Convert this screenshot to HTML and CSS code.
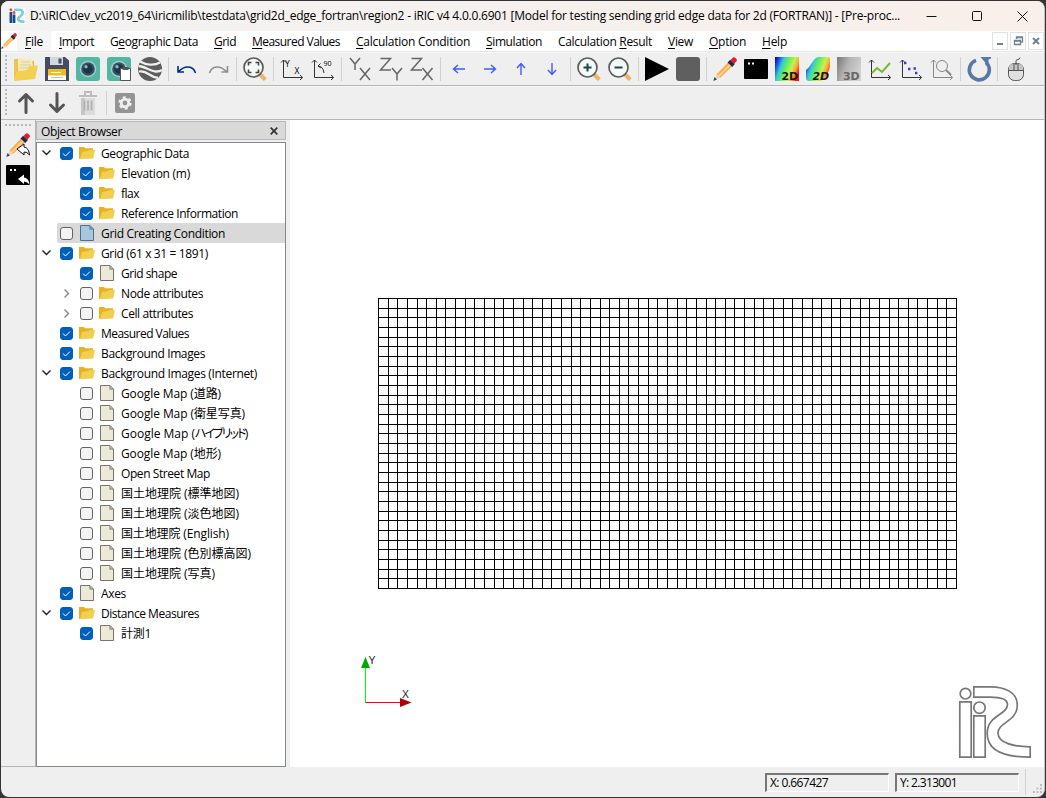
FILE: index.html
```html
<!DOCTYPE html>
<html lang="en">
<head>
<meta charset="utf-8">
<title>iRIC</title>
<link rel="stylesheet" href="styles.css">
</head>
<body>
<svg class="defs" width="0" height="0">
  <defs>
    <linearGradient id="rainbow" x1="0" y1="0.1" x2="1.05" y2="0.5">
      <stop offset="0" stop-color="#1000d8"/><stop offset=".1" stop-color="#1438f0"/><stop offset=".3" stop-color="#38c8d8"/><stop offset=".48" stop-color="#60f060"/><stop offset=".7" stop-color="#c8f050"/><stop offset=".85" stop-color="#ffa030"/><stop offset="1" stop-color="#ff1010"/>
    </linearGradient>
    <linearGradient id="gray" x1="0" y1="0" x2="1" y2=".4">
      <stop offset="0" stop-color="#777"/><stop offset=".5" stop-color="#b4b4b4"/><stop offset="1" stop-color="#d0d0d0"/>
    </linearGradient>
    <symbol id="pencil" viewBox="0 0 24 24">
      <path d="M3.5 17.5 17 3.5l4 4L7 21z" fill="#ffa94f"/><path d="M5 18.8 18.5 5l1.2 1.2L6.3 20z" fill="#ffd08c"/>
      <path d="M3.5 17.5 7 21l-5 2z" fill="#f6d3ad"/><path d="M.3 24l1.2-4 2.4 2.6z" fill="#20506c"/>
      <path d="M14.500 5.500l2.700-2.800 4.600 4.400-2.500 2.900z" fill="#12304e"/><path d="M17.3 3.2 20 .5q1.2-.8 2.3.3l1.3 1.500q.8 1-.2 2l-2.300 2.600z" fill="#e01f30"/>
    </symbol>
    <symbol id="folder" viewBox="0 0 16 13"><path d="M0 12.5V.6h5l1.2 1.2H14v3z" fill="#e6b422"/><path d="M1 12.7 3 5.5 9 4.5 10.3 3.5H16l-1.8 8.5z" fill="#f1cf50"/></symbol>
    <symbol id="page" viewBox="0 0 14 16"><path d="M.5.5h9.5l3.5 3.5v11.5H.5z" fill="var(--paper)" stroke="var(--edge)"/><path d="M9.5.5V4.5h4z" fill="var(--edge)"/><path d="M10.5 1.8v1.7h1.7z" fill="var(--paper)"/></symbol>
    <symbol id="camera" viewBox="0 0 24 24"><rect width="24" height="24" rx="3" fill="#52b7a2"/><circle cx="12" cy="12" r="8.3" fill="#a3ccca"/><circle cx="12" cy="12" r="6.8" fill="#365365"/><circle cx="12" cy="12" r="4.7" fill="#1d3446"/><circle cx="10" cy="9.7" r="1.7" fill="#8cb3c0"/></symbol>
    <symbol id="lens" viewBox="0 0 24 24"><path d="m16.8 17 5.5 5.700" stroke="#f4b15e" stroke-width="4"/><circle cx="10.500" cy="10.500" r="9.500" fill="#f4f8f6" stroke="#5a5c5c" stroke-width="1.700"/></symbol>
    <symbol id="axes" viewBox="0 0 24 24"><path d="M3.5 3v17.5H22M1 5.5 3.5 3 6 5.5M20 18l2.7 2.5L20 23" fill="none" stroke="#333"/></symbol>
    <symbol id="arrow" viewBox="0 0 24 24"><path d="M18 12H7M11 8l-4.500 4 4.500 4" fill="none" stroke="#3d5cff" stroke-width="1.400"/></symbol>
    <symbol id="bold-arrow" viewBox="0 0 24 24"><path d="M12 21.500V3.500M5.500 10 12 3.500l6.500 6.500" fill="none" stroke="#555" stroke-width="3" stroke-linecap="round" stroke-linejoin="round"/></symbol>
  </defs>
</svg>
<div class="desktop">
<div class="window">
  <header class="titlebar">
    <svg class="app-icon" width="16" height="16" viewBox="0 0 16 16"><path fill="#fff" d="M0 0h16v16H0z"/><circle cx="1.900" cy="1.800" r="1.500" fill="#e24b4b"/><circle cx="5" cy="4.500" r="1.500" fill="#e24b4b"/><path d="M.5 4h2.700V15H.5zM3.700 6.500h2.700V15H3.700z" fill="#164a86"/><path d="M5 1.800h4.500c5 0 5.500 3.500 2 6.200C7.500 11 8.500 13.800 15.500 13.800" fill="none" stroke="#7ccbe5" stroke-width="2.600"/></svg>
    <span class="title" data-w="870">D:\iRIC\dev_vc2019_64\iricmilib\testdata\grid2d_edge_fortran\region2 - iRIC v4 4.0.0.6901 [Model for testing sending grid edge data for 2d (FORTRAN)] - [Pre-proc...</span>
    <svg class="captions" width="110" height="16" viewBox="0 0 110 16" fill="none" stroke="#111"><path d="M4.500 8.500h10M95.500 3.500l10 10M105.500 3.500l-10 10"/><rect x="50.500" y="3.500" width="9" height="9" rx="1"/></svg>
  </header>
  <nav class="menubar">
    <svg class="doc-icon" width="16" height="16"><use href="#pencil"/></svg>
    <span class="menu active"><b data-w="18"><u>F</u>ile</b></span><span class="menu"><b data-w="35"><u>I</u>mport</b></span><span class="menu"><b data-w="88">G<u>e</u>ographic Data</b></span><span class="menu"><b data-w="22"><u>G</u>rid</b></span><span class="menu"><b data-w="88"><u>M</u>easured Values</b></span><span class="menu"><b data-w="114"><u>C</u>alculation Condition</b></span><span class="menu"><b data-w="56"><u>S</u>imulation</b></span><span class="menu"><b data-w="94">Calculation <u>R</u>esult</b></span><span class="menu"><b data-w="25"><u>V</u>iew</b></span><span class="menu"><b data-w="37"><u>O</u>ption</b></span><span class="menu"><b data-w="25"><u>H</u>elp</b></span>
    <div class="mdi">
      <svg width="16" height="18"><path d="M5 12h6" stroke="#708090" stroke-width="2"/></svg>
      <svg width="16" height="18"><path d="M6.500 7V5h6v5h-2M4.500 8.500h6v4h-6z M4.500 9h6M6.500 5.500h6" fill="none" stroke="#708090" stroke-width="1.3"/></svg>
      <svg width="16" height="18"><path d="m5 6 6 6M11 6l-6 6" stroke="#708090" stroke-width="2"/></svg>
    </div>
  </nav>
  <div class="toolbar">
    <i class="handle"></i>
    <svg class="tool" viewBox="0 0 24 24"><path d="M0 2h7l2 2h11v16H0z" fill="#e5b936"/><path d="m4 1 14 1 2 15-16 3z" fill="#f4e9c0"/><path d="M7 5h9M6 8h11M6 11h11" stroke="#dfcf97"/><path d="M0 24 2 14.500 13 13l2.500-4L24 8.500 21 22z" fill="#f1d052"/><path d="m0 2 4 1v8l-2 3.500L0 24z" fill="#efc748"/></svg>
    <svg class="tool" viewBox="0 0 24 24"><path d="M0 0h20l4 3.500V24H0z" fill="#454b60"/><path d="M5 0h13v8H5z" fill="#d3d8de"/><path d="M13.500 1.500h3v5h-3z" fill="#454b60"/><path d="M3 12h18v11H3z" fill="#fff"/><path d="M3 12h18v6.500H3z" fill="#efbd20"/><path d="M6 15.500h10" stroke="#fff"/><path d="M6 20.500h12" stroke="#bcc0c8"/></svg>
    <svg class="tool"><use href="#camera"/></svg>
    <svg class="tool" viewBox="0 0 24 24"><use href="#camera"/><path d="M13.500 11.500h10v12h-10z" fill="#fff" stroke="#555"/><path d="M15.500 10h6v3h-6z" fill="#555"/></svg>
    <svg class="tool" viewBox="0 0 24 24"><circle cx="12" cy="12" r="12" fill="#5c5c5c"/><path d="M2 4.500C8 8 16 9 22 5.500M.5 9C8 9 16 18 24 13M1 14.500c8-2 12 7 19 6" fill="none" stroke="#efefef" stroke-width="2.300"/></svg>
    <i class="sep"></i>
    <svg class="tool" viewBox="0 0 24 24"><path d="M20.500 16C18 8.500 10 8 3.500 14.500M3 9v6h6" fill="none" stroke="#002b82" stroke-width="1.600"/></svg>
    <svg class="tool" viewBox="0 0 24 24"><path d="M3.500 16C6 8.500 14 8 20.500 14.500M21.500 9v6h-6" fill="none" stroke="#8c8f91" stroke-width="1.600"/></svg>
    <i class="sep"></i>
    <svg class="tool" viewBox="0 0 24 24"><use href="#lens"/><path d="M5.500 8.500v-3h3M12.500 5.500h3v3M15.500 12.500v3h-3M8.500 15.500h-3v-3" fill="none" stroke="#444" stroke-width="1.600"/></svg>
    <i class="sep"></i>
    <svg class="tool" viewBox="0 0 24 24"><use href="#axes"/><text x="5" y="9.500" font-size="8.500">Y</text><text x="14.500" y="17" font-size="8.500">X</text></svg>
    <svg class="tool" viewBox="0 0 24 24"><use href="#axes"/><path d="M7 9q5 0 6 7M9.500 6.500 7 9l3 2" fill="none" stroke="#333"/><text x="12.500" y="9" font-size="7">90</text></svg>
    <i class="sep"></i>
    <svg class="tool letters" viewBox="0 0 24 24"><path d="m2 1 5 6 5-6M7 7v6M12 11l10 12M22 11 12 23"/></svg>
    <svg class="tool letters" viewBox="0 0 24 24"><path d="M1.500 1.500h10L1.500 13H12M13 11l5 6 5-6M18 17v6.500"/></svg>
    <svg class="tool letters" viewBox="0 0 24 24"><path d="M1.500 1.500h10L1.500 13H12M12.500 11l10 12M22.500 11l-10 12"/></svg>
    <i class="sep"></i>
    <svg class="tool"><use href="#arrow"/></svg><svg class="tool right"><use href="#arrow"/></svg><svg class="tool up"><use href="#arrow"/></svg><svg class="tool down"><use href="#arrow"/></svg>
    <i class="sep"></i>
    <svg class="tool" viewBox="0 0 24 24"><use href="#lens"/><path d="M6.500 10.500h8M10.500 6.500v8" stroke="#1c4a4a" stroke-width="2"/></svg>
    <svg class="tool" viewBox="0 0 24 24"><use href="#lens"/><path d="M6.500 10.500h8" stroke="#1c4a4a" stroke-width="2"/></svg>
    <i class="sep"></i>
    <svg class="tool" viewBox="0 0 24 24"><path d="m0 0 24 12L0 24z"/></svg>
    <svg class="tool" viewBox="0 0 24 24"><rect width="24" height="24" rx="3" fill="#5f5f5f"/></svg>
    <i class="sep"></i>
    <svg class="tool"><use href="#pencil"/></svg>
    <svg class="tool" viewBox="0 0 24 24"><rect y="2" width="24" height="20" rx="1"/><path d="M4 6.500h2M8 6.500h2" stroke="#fff" stroke-width="2"/></svg>
    <svg class="tool" viewBox="0 0 24 24"><path d="M0 0h24v24H0z" fill="url(#rainbow)"/><text class="dim" x="6.500" y="22.500">2D</text></svg>
    <svg class="tool" viewBox="0 0 24 24"><path d="M0 13C5 10 7 1 12 0h10q2 0 2 2v7c-1 7-6 15-11 15H3q-3 0-3-3z" fill="url(#rainbow)"/><text class="dim slant" x="6.500" y="22.500">2D</text></svg>
    <svg class="tool" viewBox="0 0 24 24"><path d="M0 0h24v24H0z" fill="url(#gray)"/><text class="dim off" x="6" y="22.500">3D</text></svg>
    <svg class="tool" viewBox="0 0 24 24"><use href="#axes"/><path d="m4 16 5-5 5 4 8-9" fill="none" stroke="#7bb52f" stroke-width="2"/></svg>
    <svg class="tool" viewBox="0 0 24 24"><use href="#axes"/><path d="M5 6h2.400M9 12h2.400M14.500 11.500h2.400M16 16h2.400" stroke="#3b35e6" stroke-width="2.400"/></svg>
    <svg class="tool faded" viewBox="0 0 24 24"><use href="#axes"/><circle cx="12" cy="9" r="5.500" fill="none" stroke="#333"/><path d="m16 13 5 5" stroke="#333" stroke-width="2"/></svg>
    <i class="sep"></i>
    <svg class="tool" viewBox="0 0 24 24"><path d="M9 3.400a10 10 0 1 0 10 2" fill="none" stroke="#5878a8" stroke-width="3.600"/><path d="M13.500 0H24v1.500L21.500 2.500V9.500z" fill="#5878a8"/></svg>
    <i class="sep"></i>
    <svg class="tool" viewBox="0 0 24 24"><rect x="4.500" y="6.500" width="15" height="17" rx="6" fill="#e0e0e0" stroke="#555"/><path d="M5 13.500V11q0-4 4-4h6q4 0 4 4v2.500z" fill="#c4c4c4"/><path d="M4.500 13.500h15M10 7v6M14 7v6M12 8V4q0-1.500 2-1.500 1.500 0 2-2" fill="none" stroke="#555"/></svg>
  </div>
  <div class="toolbar second">
    <i class="handle"></i>
    <svg class="tool"><use href="#bold-arrow"/></svg>
    <svg class="tool flip"><use href="#bold-arrow"/></svg>
    <svg class="tool" viewBox="0 0 24 24"><path d="M5 7h14v17H5z" fill="#dcdcdc"/><path d="M5 7h4v17H5z" fill="#c6c6c6"/><path d="M3 5h18M9 4V1h6v3" fill="none" stroke="#bdbdbd" stroke-width="2"/><path d="M8.500 9.500v10M12 9.500v10M15.500 9.500v10" stroke="#b2b2b2" stroke-width="1.800"/></svg>
    <i class="sep"></i>
    <svg class="tool" viewBox="0 0 24 24"><rect x="2" y="2" width="20" height="20" rx="2" fill="#949494"/><circle cx="12" cy="12" r="3.800" fill="none" stroke="#efefef" stroke-width="2.800"/><circle cx="12" cy="12" r="5.800" fill="none" stroke="#efefef" stroke-width="1.800" stroke-dasharray="3.040 3.040"/></svg>
  </div>
  <main class="work">
    <aside class="side-tools">
      <i class="handle-h"></i>
      <svg class="tool" viewBox="0 0 24 24"><use href="#pencil"/><path d="M11 16l7-5v3q5 1 5.500 8-2.500-3.500-5.500-3v3z" fill="#fff" stroke="#111"/></svg>
      <svg class="tool" viewBox="0 0 24 24"><rect y="2" width="24" height="20" rx="1"/><path d="M4 7h2M8 7h2" stroke="#fff" stroke-width="2"/><path d="M12 16l6-4.500v3q5 1 5.500 7-2.500-3-5.500-3v2.500z" fill="#fff"/></svg>
    </aside>
    <section class="dock">
      <div class="dock-title"><span data-w="81">Object Browser</span><svg width="8" height="8"><path d="m.7.7 6.600 6.600M7.300.7.7 7.300" stroke="#333" stroke-width="1.700"/></svg></div>
      <div class="tree" id="tree"></div>
    </section>
    <section class="canvas">
      <svg width="755" height="647" viewBox="290 120 755 647">
        <path id="mesh" fill="none" stroke="#000" shape-rendering="crispEdges"/>
        <path d="M365.500 702.500V668" stroke="#0f0"/><path d="M365.500 702.500H400" stroke="#f00"/>
        <path d="m365.500 657 4.500 11h-9z" fill="#00a800"/><path d="m411.500 702.500-11.500 4.500v-9z" fill="#b00000"/>
        <text x="368.500" y="664" class="axis">Y</text><text x="402" y="698" class="axis">X</text>
        <g fill="none" stroke="#777" stroke-width="1.700">
          <circle cx="965.500" cy="693.700" r="5.300"/><circle cx="979.500" cy="707.700" r="5.700"/>
          <path d="M959.800 701.800h11.400v55.400h-11.400zM973.800 715.800h11.400v41.400h-11.400zM973.800 686.800H990C1006 686.800 1017.300 693 1017.300 705 1017.300 722 998 722 998 733 998 743 1014 746.800 1030.200 746.800V757.200C1008 757.200 987.200 752 987.200 733.500 987.200 715 1007.500 715 1007.500 704.500 1007.500 698.500 998 697.200 990 697.200H973.800z"/>
        </g>
      </svg>
    </section>
  </main>
  <footer class="status"><div class="cell"><span data-w="58">X: 0.667427</span></div><div class="cell"><span data-w="57">Y: 2.313001</span></div><i class="status-sep"></i>
    <svg class="grip" width="10" height="10" fill="#bdbdbd"><path d="M7 0h2v2H7zM3.500 3.500h2v2h-2zM7 3.500h2v2H7zM0 7h2v2H0zM3.500 7h2v2h-2zM7 7h2v2H7z"/></svg>
  </footer>
</div>
</div>
<script src="app.js"></script>
</body>
</html>
```

FILE: styles.css
```css
* { box-sizing: border-box; }
body { margin: 0; font: 12px/16px "Open Sans", "Noto Sans CJK JP", sans-serif; color: #000; overflow: hidden; }
svg { display: block; flex: none; }
i { flex: none; }
b { font-weight: normal; }
.defs { position: absolute; }
.desktop { width: 1046px; height: 798px; padding: 1px 1px 1px; background: #353335; }
.window { display: flex; flex-direction: column; height: 796px; border-radius: 8px; overflow: hidden; background: #efefef; border-right: 1px solid #c4c4c4; }
.titlebar { height: 30px; display: flex; align-items: center; padding: 0 12px 0 8px; background: linear-gradient(90deg, #f3f3f3, #f5f1ee 40%, #f9efeb); }
.title { margin-left: 5px; white-space: nowrap; width: 872px; }
.captions { margin-left: auto; }
.menubar { height: 21px; display: flex; align-items: center; background: #fff; border-bottom: 1px solid #e5e5e5; }
.doc-icon { margin: 0; }
.menu { height: 20px; padding: 2px 8px 0; white-space: nowrap; line-height: 18px; }
.menu.active { background: #f5f5f5; }
.menu b, .row b { display: block; white-space: nowrap; }
.row b { padding-top: 1px; line-height: 17px; height: 18px; }
u { text-decoration: underline; text-underline-offset: 2px; text-decoration-thickness: 1px; }
.mdi { margin-left: auto; display: flex; gap: 2px; }
.mdi svg { outline: 1px solid #e2e2e2; outline-offset: -1px; background: #fdfdfd; }
.toolbar { height: 34px; display: flex; align-items: center; gap: 7px; padding-left: 4px; border-bottom: 1px solid #b5b5b5; box-shadow: inset 0 1px #f8f8f8; }
.handle { width: 2px; height: 27px; background: repeating-linear-gradient(#b8b8b8 0 2px, transparent 2px 4px); }
.tool { width: 24px; height: 24px; overflow: visible; font-family: "Open Sans", sans-serif; }
.sep { width: 1px; height: 24px; margin: 0 -1px; background: #d0d0d0; }
.letters path { fill: none; stroke: #666; stroke-width: 1.5; }
.right { transform: rotate(180deg); }
.up { transform: rotate(90deg); }
.down { transform: rotate(-90deg); }
.flip { transform: scaleY(-1); }
.faded { opacity: .55; }
.dim { font: bold 11px "DejaVu Sans", sans-serif; letter-spacing: -.2px; fill: #181818; }
.slant { font-style: oblique; }
.off { fill: #666; }
.work { flex: 1; display: flex; min-height: 0; }
.side-tools { width: 35px; display: flex; flex-direction: column; align-items: center; gap: 6px; padding-top: 4px; border-right: 1px solid #b5b5b5; border-bottom: 1px solid #b5b5b5; }
.handle-h { width: 27px; height: 2px; margin-bottom: 1px; background: repeating-linear-gradient(90deg, #b8b8b8 0 2px, transparent 2px 4px); }
.dock { width: 250px; display: flex; flex-direction: column; padding-top: 1px; }
.dock-title { height: 19px; margin: 0 0 2px 0; padding: 1px 7px 0 4px; display: flex; align-items: center; justify-content: space-between; background: #d9d9d9; border: 1px solid #b8b8b8; white-space: nowrap; line-height: 17px; }
.tree { flex: 1; background: #fff; border: 1px solid #828790; }
.row { height: 20px; display: flex; align-items: center; padding-left: 4px; }
.row.child { padding-left: 24px; }
.twisty { width: 11px; height: 10px; margin-right: 5px; }
.item { flex: 1; height: 20px; display: flex; align-items: center; padding-left: 3px; }
.selected .item { background: #d9d9d9; border-radius: 2px 0 0 2px; }
.check { width: 13px; height: 13px; margin-right: 6px; border: 1px solid #626262; border-radius: 3px; background: #f3f3f3; }
.check.on { border-color: #005fb8; background: #005fb8; }
.pic { width: 16px; height: 16px; margin-right: 6px; }
.pic.page { --paper: #ece9d8; --edge: #77756a; }
.selected .pic.page { --paper: #a6c8dd; --edge: #4d7287; }
.kana { font-feature-settings: "palt"; letter-spacing: -1.9px; }
.canvas { flex: 1; margin-left: 4px; background: #fff; overflow: hidden; }
.axis { font: 10.5px "Liberation Sans", sans-serif; fill: #222; }
.status { height: 30px; display: flex; align-items: center; justify-content: flex-end; }
.cell { width: 124px; height: 19px; padding: 0 3px; margin-right: 6px; border: 1px solid #fff; border-top: 2px solid #777; border-left: 2px solid #777; line-height: 16px; white-space: nowrap; }
.status-sep { width: 1px; height: 26px; background: #d0d0d0; }
.grip { align-self: flex-end; margin: 0 1px 3px 7px; }
```

FILE: app.js
```js
// depth, twisty (v open, > closed), checked, icon, label, label width
const rows = [
  [0, "v", 1, "folder", "Geographic Data", 88],
  [1, "", 1, "folder", "Elevation (m)", 69],
  [1, "", 1, "folder", "flax", 18],
  [1, "", 1, "folder", "Reference Information", 117],
  [0, "", 0, "page", "Grid Creating Condition", 124, "selected"],
  [0, "v", 1, "folder", "Grid (61 x 31 = 1891)", 107],
  [1, "", 1, "page", "Grid shape", 56],
  [1, ">", 0, "folder", "Node attributes", 82],
  [1, ">", 0, "folder", "Cell attributes", 72],
  [0, "", 1, "folder", "Measured Values", 88],
  [0, "", 1, "folder", "Background Images", 104],
  [0, "v", 1, "folder", "Background Images (Internet)", 156],
  [1, "", 0, "page", "Google Map (道路)", 100],
  [1, "", 0, "page", "Google Map (衛星写真)", 124],
  [1, "", 0, "page", 'Google Map (<span class="kana">ハイブリッド</span>)', 0],
  [1, "", 0, "page", "Google Map (地形)", 100],
  [1, "", 0, "page", "Open Street Map", 89],
  [1, "", 0, "page", "国土地理院 (標準地図)", 118],
  [1, "", 0, "page", "国土地理院 (淡色地図)", 118],
  [1, "", 0, "page", "国土地理院 (English)", 108],
  [1, "", 0, "page", "国土地理院 (色別標高図)", 130],
  [1, "", 0, "page", "国土地理院 (写真)", 94],
  [0, "", 1, "page", "Axes", 25],
  [0, "v", 1, "folder", "Distance Measures", 98],
  [1, "", 1, "page", "計測1", 30]
];
const twisties = { "v": '<path d="m1.500 2.500 4 4 4-4" fill="none" stroke="#222" stroke-width="1.400"/>', ">": '<path d="m3.500 1.500 4 4-4 4" fill="none" stroke="#888" stroke-width="1.400"/>', "": "" };
const tick = '<svg width="11" height="11"><path d="m2 5.500 2.500 2.500L9 3.500" fill="none" stroke="#fff"/></svg>';
document.getElementById("tree").innerHTML = rows.map(([depth, t, on, icon, label, w, cls]) =>
  `<div class="row ${depth ? "child" : ""} ${cls || ""}"><svg class="twisty">${twisties[t]}</svg><div class="item"><span class="check ${on ? "on" : ""}">${on ? tick : ""}</span><svg class="pic ${icon}"><use href="#${icon}"/></svg><b ${w ? `data-w="${w}"` : ""}>${label}</b></div></div>`).join("");

// Grid of 61 x 31 nodes
let d = "";
for (let i = 0; i <= 60; i++) d += `M${378.5 + Math.round(i * 578 / 60)} 298V589`;
for (let j = 0; j <= 30; j++) d += `M378 ${298.5 + Math.round(j * 290 / 30)}H957`;
document.getElementById("mesh").setAttribute("d", d);

// Track labels to their nominal widths
document.querySelectorAll("[data-w]").forEach(el => {
  const range = document.createRange();
  range.selectNodeContents(el);
  const extra = (+el.dataset.w - range.getBoundingClientRect().width) / el.textContent.length;
  el.style.letterSpacing = extra + "px";
});
```
